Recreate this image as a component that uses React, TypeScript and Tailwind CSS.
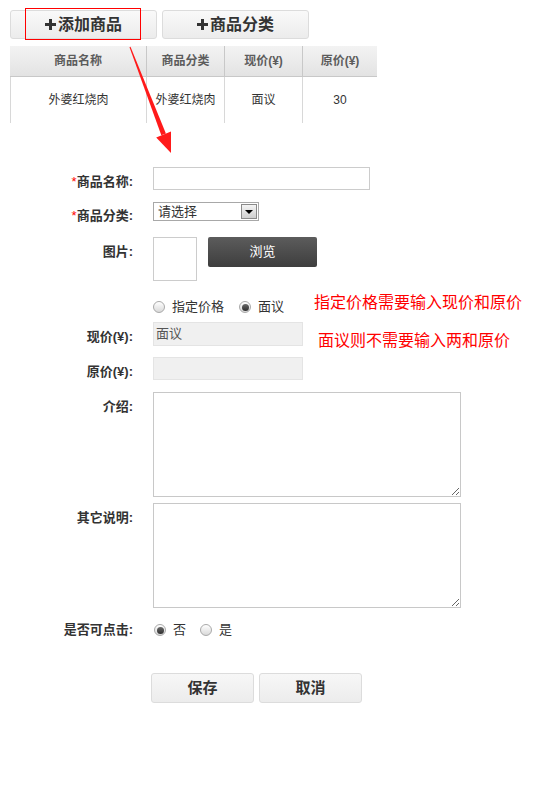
import React from "react";

const font = { fontFamily: '"Liberation Sans", "Noto Sans CJK SC", sans-serif' };

function Radio({ checked }: { checked?: boolean }) {
  return (
    <span className="relative inline-flex h-[12px] w-[12px] items-center justify-center rounded-full border border-[#a9a9a9] bg-gradient-to-b from-[#ffffff] to-[#d9d9d9]">
      {checked ? <span className="h-[7px] w-[7px] rounded-full bg-gradient-to-b from-[#6a6a6a] to-[#2e2e2e]" /> : null}
    </span>
  );
}

function Plus() {
  return (
    <span className="relative mr-[2px] inline-block h-[11px] w-[11px]">
      <span className="absolute left-0 top-[4px] h-[3px] w-[11px] bg-[#333]" />
      <span className="absolute left-[4px] top-0 h-[11px] w-[3px] bg-[#333]" />
    </span>
  );
}

function Label({ children, req, pt = "pt-[7px]" }: { children: React.ReactNode; req?: boolean; pt?: string }) {
  return (
    <div className={`w-[133px] shrink-0 text-right text-[13px] font-bold leading-[16px] text-[#333] ${pt}`}>
      {req ? <span className="text-[#ff0000] font-normal">*</span> : null}
      {children}
    </div>
  );
}

export default function App() {
  return (
    <div className="relative h-[801px] w-[557px] overflow-hidden bg-white" style={font}>
      {/* top buttons */}
      <div className="flex gap-[5px] pl-[10px] pt-[10px]">
        <button className="flex h-[29px] w-[147px] items-center justify-center rounded-[3px] border border-[#dcdcdc] bg-gradient-to-b from-[#f9f9f9] to-[#ececec] text-[16px] font-bold text-[#333]">
          <Plus />添加商品
        </button>
        <button className="flex h-[29px] w-[147px] items-center justify-center rounded-[3px] border border-[#dcdcdc] bg-gradient-to-b from-[#f9f9f9] to-[#ececec] text-[16px] font-bold text-[#333]">
          <Plus />商品分类
        </button>
      </div>

      {/* table */}
      <div className="ml-[10px] mt-[7px] w-[367px]">
        <div className="flex h-[31px] border-b border-[#c8c8c8] bg-gradient-to-b from-[#f3f3f3] to-[#e3e3e3] text-[12px] font-bold text-[#5c5c5c]">
          <div className="flex w-[137px] items-center justify-center border-r border-[#c8c8c8]">商品名称</div>
          <div className="flex w-[78px] items-center justify-center border-r border-[#c8c8c8]">商品分类</div>
          <div className="flex w-[78px] items-center justify-center border-r border-[#c8c8c8]">现价(¥)</div>
          <div className="flex w-[74px] items-center justify-center">原价(¥)</div>
        </div>
        <div className="flex h-[46px] text-[12px] text-[#333]">
          <div className="flex w-[137px] items-center justify-center border-l border-r border-[#d8d8d8]">外婆红烧肉</div>
          <div className="flex w-[78px] items-center justify-center border-r border-[#d8d8d8]">外婆红烧肉</div>
          <div className="flex w-[78px] items-center justify-center border-r border-[#d8d8d8]">面议</div>
          <div className="flex w-[74px] items-center justify-center">30</div>
        </div>
      </div>

      {/* form */}
      <div className="mt-[44px]">
        <div className="flex h-[23px]">
          <Label req>商品名称:</Label>
          <div className="ml-[20px] h-[23px] w-[217px] border border-[#cccccc] bg-white" />
        </div>

        <div className="mt-[12px] flex h-[19px]">
          <Label req pt="pt-[6px]">商品分类:</Label>
          <div className="ml-[20px] flex h-[19px] w-[106px] items-center justify-between border border-[#a8a8a8] bg-white pl-[4px] pr-[1px]">
            <span className="text-[13px] leading-none text-[#333]">请选择</span>
            <span className="flex h-[15px] w-[16px] items-center justify-center border border-[#8a8a8a] bg-gradient-to-b from-[#f4f4f4] to-[#cfcfcf]">
              <span className="h-0 w-0 border-l-[4px] border-r-[4px] border-t-[4px] border-l-transparent border-r-transparent border-t-black" />
            </span>
          </div>
        </div>

        <div className="mt-[16px] flex">
          <Label>图片:</Label>
          <div className="ml-[20px] h-[44px] w-[44px] border border-[#cccccc]" />
          <button className="ml-[11px] h-[30px] w-[109px] rounded-[2px] bg-gradient-to-b from-[#5c5c5c] to-[#3e3e3e] text-[13px] text-white">
            浏览
          </button>
        </div>

        <div className="mt-[16px] flex h-[20px] items-center">
          <div className="w-[133px]" />
          <div className="ml-[20px] flex items-center text-[13px] text-[#333]">
            <Radio />
            <span className="ml-[7px]">指定价格</span>
            <span className="ml-[15px] flex items-center">
              <Radio checked />
            </span>
            <span className="ml-[7px]">面议</span>
          </div>
          <div className="-mt-[8px] ml-[30px] whitespace-nowrap text-[16px] text-[#ff0000]">指定价格需要输入现价和原价</div>
        </div>

        <div className="mt-[5px] flex h-[24px]">
          <Label>现价(¥):</Label>
          <div className="ml-[20px] flex h-[24px] w-[150px] items-center border border-[#e4e4e4] bg-[#f0f0f0] pl-[2px] text-[13px] text-[#555]">面议</div>
          <div className="ml-[15px] mt-[9px] h-[20px] whitespace-nowrap text-[16px] leading-[20px] text-[#ff0000]">面议则不需要输入两和原价</div>
        </div>

        <div className="mt-[11px] flex h-[23px]">
          <Label>原价(¥):</Label>
          <div className="ml-[20px] h-[23px] w-[150px] border border-[#e4e4e4] bg-[#f0f0f0]" />
        </div>

        <div className="mt-[12px] flex">
          <Label>介绍:</Label>
          <textarea className="ml-[20px] block h-[105px] w-[308px] border border-[#c8c8c8] bg-white outline-none" />
        </div>

        <div className="mt-[6px] flex">
          <Label>其它说明:</Label>
          <textarea className="ml-[20px] block h-[105px] w-[308px] border border-[#c8c8c8] bg-white outline-none" />
        </div>

        <div className="mt-[12px] flex h-[20px] items-center">
          <div className="w-[133px] text-right text-[13px] font-bold text-[#333]">是否可点击:</div>
          <div className="ml-[20px] flex items-center text-[13px] text-[#333]">
            <span className="ml-[1px] flex items-center">
              <Radio checked />
            </span>
            <span className="ml-[7px]">否</span>
            <span className="ml-[14px] flex items-center">
              <Radio />
            </span>
            <span className="ml-[7px]">是</span>
          </div>
        </div>

        <div className="ml-[151px] mt-[33px] flex gap-[5px]">
          <button className="h-[30px] w-[103px] rounded-[3px] border border-[#dcdcdc] bg-gradient-to-b from-[#f7f7f7] to-[#ececec] text-[15px] font-bold text-[#333]">保存</button>
          <button className="h-[30px] w-[103px] rounded-[3px] border border-[#dcdcdc] bg-gradient-to-b from-[#f7f7f7] to-[#ececec] text-[15px] font-bold text-[#333]">取消</button>
        </div>
      </div>

      {/* annotation overlays */}
      <div className="pointer-events-none absolute left-[25px] top-[8px] h-[32px] w-[116px] border border-[#ff0000]" />
      <svg className="pointer-events-none absolute left-0 top-0" width="557" height="801">
        <polygon points="129.5,47.2 130.5,46.8 165.9,133.5 161.3,135.3" fill="#ff1a1a" />
        <polygon points="171,153 156.2,137.4 171,131.4" fill="#ff1a1a" />
      </svg>
    </div>
  );
}
